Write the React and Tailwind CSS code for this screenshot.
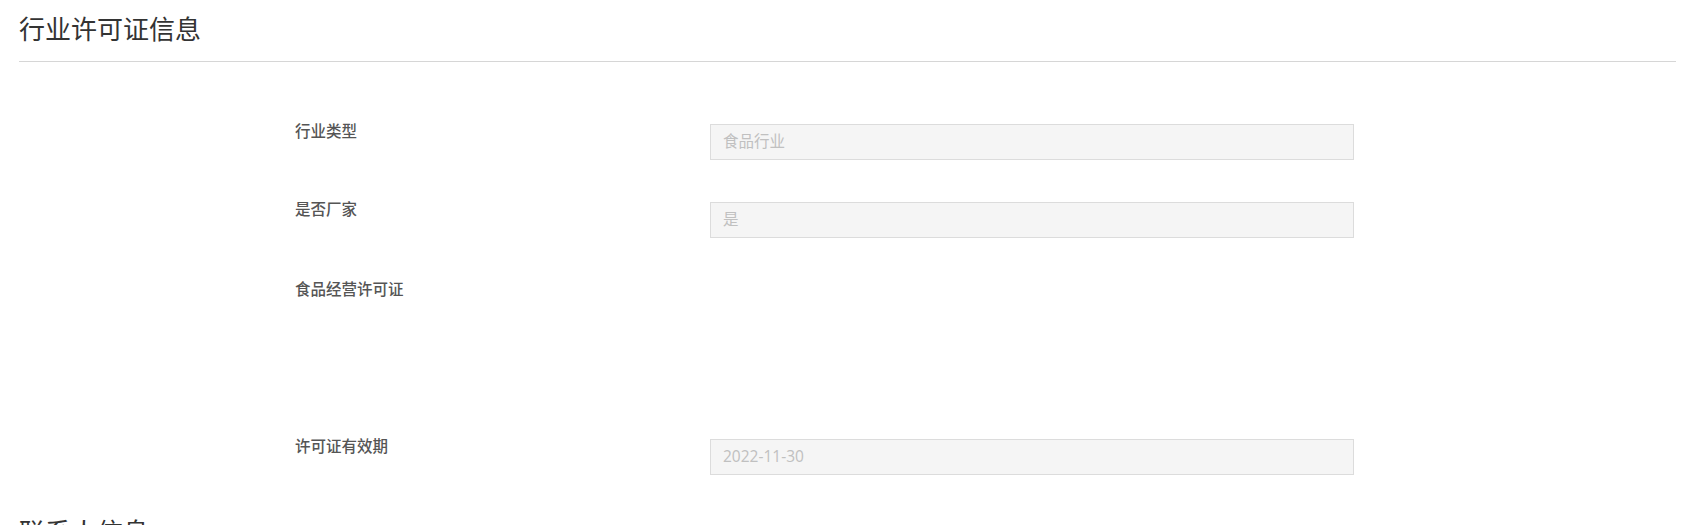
const font = { fontFamily: '"Open Sans", "Noto Sans CJK SC", sans-serif' }

function Field({ label, value }) {
  return (
    <div className="flex items-start">
      <div className="w-[415px] shrink-0 text-[15.5px] leading-[20px] font-medium text-[#555]">{label}</div>
      <div className="mt-[3px] w-[644px] h-[36px] border border-[#dcdcdc] bg-[#f5f5f5] pl-[12px] flex items-center text-[15.5px] text-[#c0c0c0]">
        {value}
      </div>
    </div>
  )
}

function SectionTitle({ children }) {
  return (
    <div className="pt-[14px] pb-[17px] border-b border-[#d6d6d6] text-[26px] leading-[30px] text-[#333]">
      {children}
    </div>
  )
}

export default function App() {
  return (
    <div className="w-full bg-white pl-[19px] pr-[30px] overflow-hidden h-[525px]" style={font}>
      <SectionTitle>行业许可证信息</SectionTitle>
      <div className="ml-[276px] pt-[59px]">
        <Field label="行业类型" value="食品行业" />
        <div className="h-[39px]" />
        <Field label="是否厂家" value="是" />
        <div className="h-[41px]" />
        <div className="flex items-start">
          <div className="w-[415px] shrink-0 text-[15.5px] leading-[20px] font-medium text-[#555]">食品经营许可证</div>
          <div className="h-[118px]" />
        </div>
        <div className="h-[39px]" />
        <Field label="许可证有效期" value="2022-11-30" />
      </div>
      <div className="mt-[28px]">
        <SectionTitle>联系人信息</SectionTitle>
      </div>
    </div>
  )
}
